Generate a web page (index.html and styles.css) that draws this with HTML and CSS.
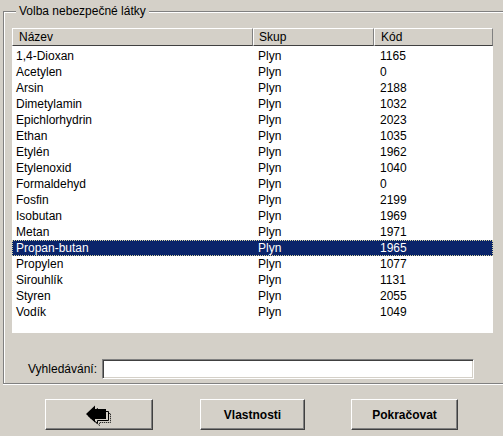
FILE: index.html
```html
<!DOCTYPE html>
<html lang="cs">
<head>
<meta charset="utf-8">
<title>Volba nebezpečné látky</title>
<link rel="stylesheet" href="styles.css">
</head>
<body>
<fieldset class="group">
  <legend class="group-title">Volba nebezpečné látky</legend>
  <div class="list">
    <div class="list-head">
      <div class="hcell c-name">Název</div>
      <div class="hcell c-grp">Skup</div>
      <div class="hcell c-code">Kód</div>
    </div>
    <div class="row"><span class="c-name">1,4-Dioxan</span><span class="c-grp">Plyn</span><span class="c-code">1165</span></div>
    <div class="row"><span class="c-name">Acetylen</span><span class="c-grp">Plyn</span><span class="c-code">0</span></div>
    <div class="row"><span class="c-name">Arsin</span><span class="c-grp">Plyn</span><span class="c-code">2188</span></div>
    <div class="row"><span class="c-name">Dimetylamin</span><span class="c-grp">Plyn</span><span class="c-code">1032</span></div>
    <div class="row"><span class="c-name">Epichlorhydrin</span><span class="c-grp">Plyn</span><span class="c-code">2023</span></div>
    <div class="row"><span class="c-name">Ethan</span><span class="c-grp">Plyn</span><span class="c-code">1035</span></div>
    <div class="row"><span class="c-name">Etylén</span><span class="c-grp">Plyn</span><span class="c-code">1962</span></div>
    <div class="row"><span class="c-name">Etylenoxid</span><span class="c-grp">Plyn</span><span class="c-code">1040</span></div>
    <div class="row"><span class="c-name">Formaldehyd</span><span class="c-grp">Plyn</span><span class="c-code">0</span></div>
    <div class="row"><span class="c-name">Fosfin</span><span class="c-grp">Plyn</span><span class="c-code">2199</span></div>
    <div class="row"><span class="c-name">Isobutan</span><span class="c-grp">Plyn</span><span class="c-code">1969</span></div>
    <div class="row"><span class="c-name">Metan</span><span class="c-grp">Plyn</span><span class="c-code">1971</span></div>
    <div class="row selected"><span class="c-name">Propan-butan</span><span class="c-grp">Plyn</span><span class="c-code">1965</span></div>
    <div class="row"><span class="c-name">Propylen</span><span class="c-grp">Plyn</span><span class="c-code">1077</span></div>
    <div class="row"><span class="c-name">Sirouhlík</span><span class="c-grp">Plyn</span><span class="c-code">1131</span></div>
    <div class="row"><span class="c-name">Styren</span><span class="c-grp">Plyn</span><span class="c-code">2055</span></div>
    <div class="row"><span class="c-name">Vodík</span><span class="c-grp">Plyn</span><span class="c-code">1049</span></div>
  </div>
  <div class="search">
    <label class="search-label" for="q">Vyhledávání:</label>
    <input class="search-input" id="q" type="text">
  </div>
</fieldset>
<div class="buttons">
  <button class="btn btn-back" type="button" aria-label="Zpět">
    <svg width="28" height="22" viewBox="0 0 28 22">
      <path d="M0.5 9 L9.5 1.5 L9.5 4.5 L20.5 4.5 L20.5 13.5 L9.5 13.5 L9.5 16.5 Z" transform="translate(4,4)" fill="none" stroke="#000" stroke-width="1" stroke-dasharray="1 1"/>
      <path d="M0.5 9 L9.5 1.5 L9.5 4.5 L20.5 4.5 L20.5 13.5 L9.5 13.5 L9.5 16.5 Z" transform="translate(2,2)" fill="#d4d0c8" stroke="#000" stroke-width="1"/>
      <path d="M0 9 L9 0.5 L9 4 L20 4 L20 14 L9 14 L9 17.5 Z" fill="#000"/>
    </svg>
  </button>
  <button class="btn btn-props" type="button">Vlastnosti</button>
  <button class="btn btn-next" type="button">Pokračovat</button>
</div>
</body>
</html>
```
FILE: styles.css
```css
html, body {
  margin: 0;
  padding: 0;
}
body {
  width: 503px;
  height: 436px;
  overflow: hidden;
  background: #d4d0c8;
  font-family: "Liberation Sans", Arial, sans-serif;
  font-size: 12px;
  color: #000;
}
.group {
  margin: 4px 0 0 3px;
  padding: 9px 0 4px 8px;
  border: 1px solid #808080;
  border-right: none;
  box-shadow: inset 1px 1px 0 #fff, 0 1px 0 #fff;
  min-width: 0;
}
.group-title {
  margin-left: 4px;
  padding: 0 3px;
  line-height: 15px;
  background: #d4d0c8;
}
.list {
  width: 481px;
  height: 305px;
  background: #fff;
  overflow: hidden;
}
.list-head {
  display: flex;
  height: 18px;
  margin-bottom: 2px;
}
.hcell {
  box-sizing: border-box;
  height: 18px;
  line-height: 16px;
  padding-left: 5px;
  background: #d4d0c8;
  border-top: 1px solid #fff;
  border-left: 1px solid #fff;
  border-right: 1px solid #808080;
  border-bottom: 1px solid #404040;
}
.row {
  display: flex;
  height: 16px;
  line-height: 16px;
  white-space: nowrap;
}
.c-name { width: 241px; box-sizing: border-box; padding-left: 4px; }
.c-grp  { width: 121px; box-sizing: border-box; padding-left: 5px; }
.c-code { width: 119px; box-sizing: border-box; padding-left: 6px; }
.hcell.c-name { padding-left: 6px; }
.row.selected {
  background: #0a246a;
  color: #fff;
  outline: 1px dotted #d8d4a0;
  outline-offset: -1px;
}
.search {
  display: flex;
  align-items: center;
  margin-top: 26px;
  height: 20px;
}
.search-label {
  width: 90px;
  text-align: right;
  padding-right: 5px;
  box-sizing: border-box;
}
.search-input {
  box-sizing: border-box;
  width: 372px;
  height: 20px;
  margin: 0;
  padding: 0 3px;
  font: inherit;
  background: #fff;
  border-top: 1px solid #808080;
  border-left: 1px solid #808080;
  border-right: 1px solid #fff;
  border-bottom: 1px solid #fff;
  box-shadow: inset 1px 1px 0 #404040, inset -1px -1px 0 #d4d0c8;
  outline: none;
}
.buttons {
  display: flex;
  gap: 47px;
  margin-top: 15px;
  padding-left: 45px;
}
.btn {
  box-sizing: border-box;
  height: 31px;
  margin: 0;
  padding: 0;
  background: #d4d0c8;
  font-family: "Liberation Sans", Arial, sans-serif;
  font-size: 12px;
  font-weight: bold;
  color: #000;
  border-top: 1px solid #fff;
  border-left: 1px solid #fff;
  border-right: 1px solid #404040;
  border-bottom: 1px solid #404040;
  box-shadow: inset -1px -1px 0 #808080;
  display: flex;
  align-items: center;
  justify-content: center;
}
.btn-back { width: 108px; }
.btn-back svg { display: block; margin: 2px 0 0 2px; }
.btn-props { width: 105px; }
.btn-next { width: 107px; margin-left: -1px; }
```
